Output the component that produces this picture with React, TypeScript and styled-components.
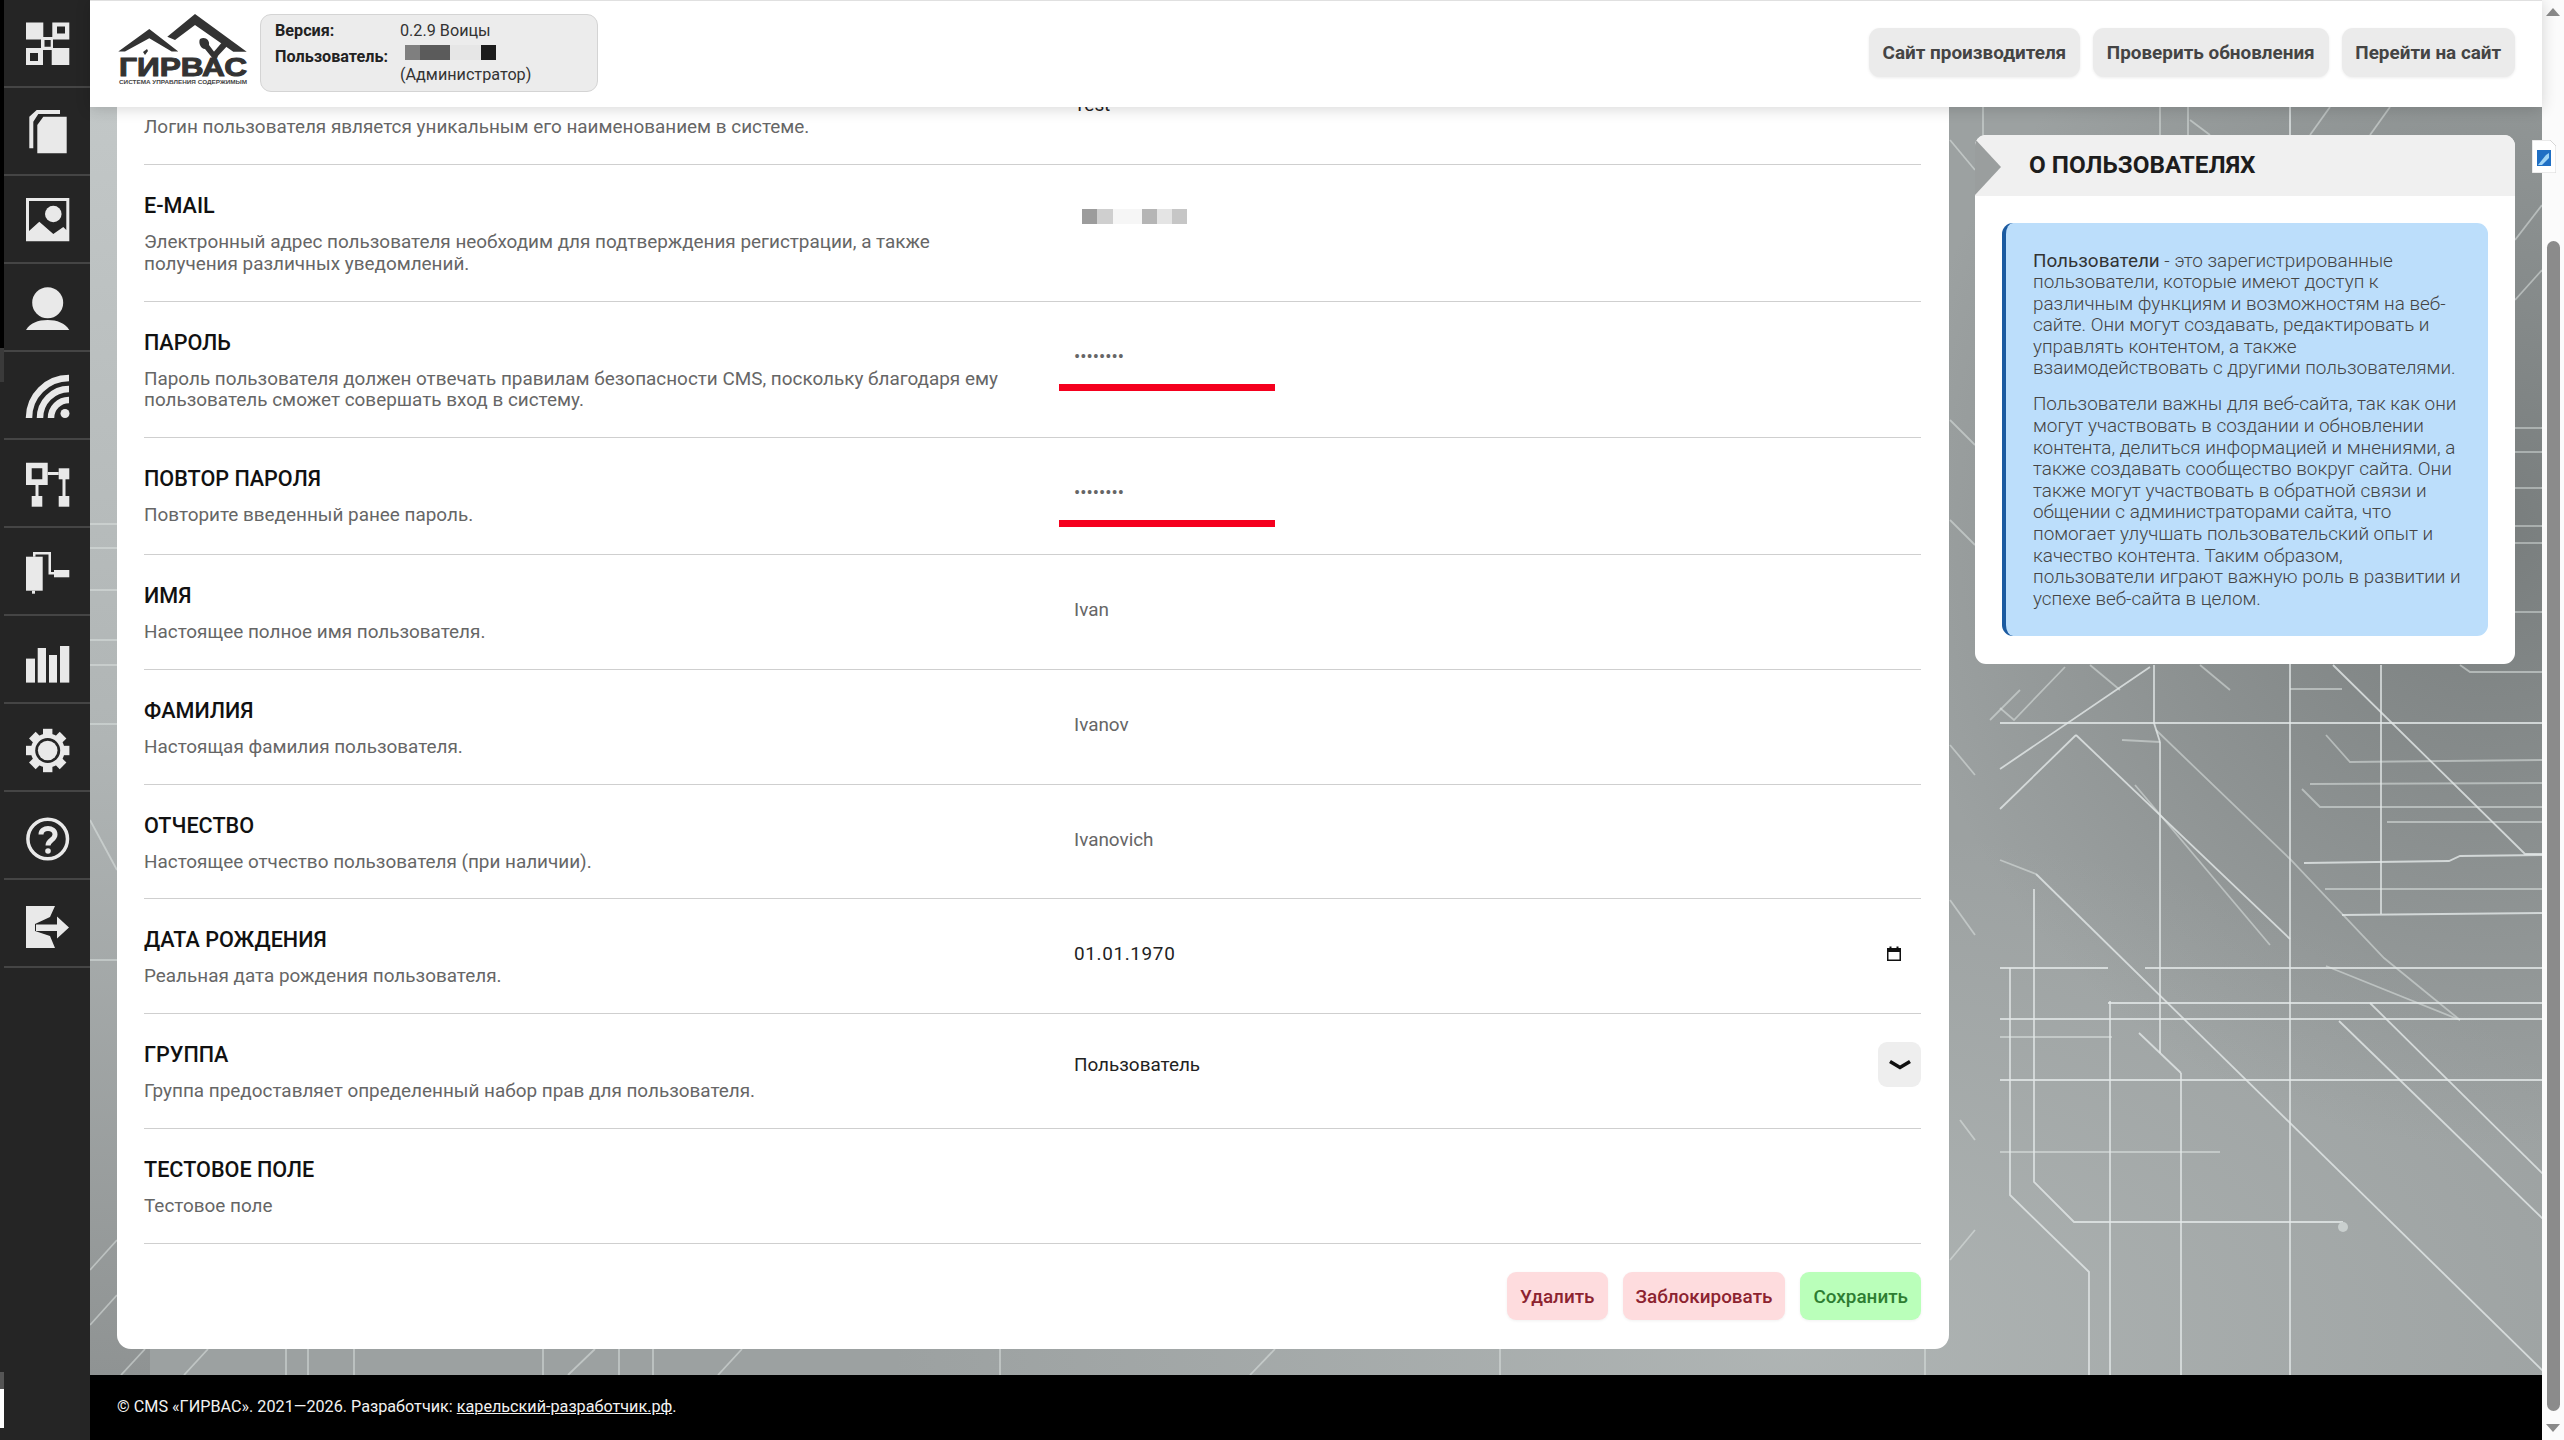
import React from "react";
import styled, { createGlobalStyle } from "styled-components";

const Global = createGlobalStyle`
  html, body { margin: 0; padding: 0; height: 100%; overflow: hidden; background: #fff; }
  #root { height: 100%; }
  * { box-sizing: border-box; }
  body { font-family: Roboto, "Noto Sans", "Liberation Sans", sans-serif; }
`;

const Page = styled.div`
  position: relative;
  display: grid;
  grid-template-columns: 90px 1fr 22px;
  grid-template-rows: 107px 1fr 65px;
  width: 100%;
  height: 100vh;
  overflow: hidden;
`;

/* ---------- sidebar ---------- */
const Sidebar = styled.nav`
  grid-row: 1 / 4;
  position: relative;
  background: #252525;
  padding-left: 4px;
`;
const SideTrack = styled.div<{ $top: number; $height: number; $color: string }>`
  position: absolute;
  left: 0;
  top: ${(p) => p.$top}px;
  width: 4px;
  height: ${(p) => p.$height}px;
  background: ${(p) => p.$color};
`;
const NavItem = styled.a`
  display: block;
  height: 88px;
  padding: 22px 0 0 22px;
  border-bottom: 2px solid #454545;
`;
const NavIcon = styled.svg`
  display: block;
  width: 44px;
  height: 44px;
  overflow: visible;
  fill: #e9e9e9;
`;

const gearTeeth = [0, 45, 90, 135, 180, 225, 270, 315];

const icons: React.ReactNode[] = [
  <>
    <rect x="0" y="0.5" width="17.3" height="17" />
    <path fillRule="evenodd" d="M26.3 .5h17v17h-17zM31 4.500v7h8v-7z" />
    <path fillRule="evenodd" d="M15 15h12v13H15zM18.500 18v6.700h6.200V18z" />
    <path fillRule="evenodd" d="M0 26h17v17H0zM4 31v8h8v-8z" />
    <rect x="25.700" y="26" width="17.600" height="17" />
  </>,
  <>
    <path d="M11.300 15l6-8.300h23.400v36.600H11.300z" />
    <path d="M3.300 38.300V6.700L10.700 0H34v4H12.300l-5 7.700v26.600z" />
  </>,
  <>
    <path fillRule="evenodd" d="M0 0h43.300v43.300H0zM3 3v30l10.300-9.300 14 12.300 10-7 3 3V3z" />
    <circle cx="27.300" cy="16" r="8.300" />
  </>,
  <>
    <circle cx="21.700" cy="16.700" r="15.500" />
    <path d="M0 44C4 37 12 34 21.700 34 31 34 39 37 43.300 44z" />
  </>,
  <>
    <circle cx="39" cy="39.500" r="4.500" />
    <g fill="none" stroke="#e9e9e9" strokeWidth="6.500">
      <path d="M3 44A40 40 0 0 1 43 4" />
      <path d="M14 44A29 29 0 0 1 43 15" />
      <path d="M25 44A18 18 0 0 1 43 26" />
    </g>
  </>,
  <>
    <path fillRule="evenodd" d="M0 .7h21.700V23H0zM5.700 6.300v11h10.600v-11z" />
    <rect x="32.700" y="6.300" width="10.600" height="11" />
    <rect x="5.700" y="34" width="10.600" height="10.700" />
    <rect x="32.700" y="34" width="10.600" height="10.700" />
    <rect x="21.700" y="10" width="11" height="3" />
    <rect x="9.500" y="23" width="3" height="11" />
    <rect x="36.500" y="17" width="3" height="17" />
  </>,
  <>
    <rect x="0" y="6.700" width="16.700" height="34" />
    <rect x="6" y="40.700" width="3" height="3" />
    <rect x="28" y="20" width="15.300" height="7.300" />
    <path d="M7 6.700V2h18v20h3v2.500h-5.500V4.500H9.500v2.200z" />
  </>,
  <>
    <rect x="0" y="20.600" width="9" height="24" />
    <rect x="11.700" y="10" width="8.300" height="34.600" />
    <rect x="23" y="17" width="8" height="27.600" />
    <rect x="34" y="8" width="9.300" height="36.600" />
  </>,
  <>
    {gearTeeth.map((a) => (
      <rect key={a} x="17" y="2.800" width="9.400" height="10" transform={`rotate(${a} 21.700 24.500)`} />
    ))}
    <circle cx="21.700" cy="24.500" r="17" />
    <circle cx="21.700" cy="24.500" r="12.500" fill="#252525" />
    <circle cx="21.700" cy="24.500" r="9.800" />
  </>,
  <>
    <circle cx="21.700" cy="25" r="19.800" fill="none" stroke="#e9e9e9" strokeWidth="3.500" />
    <path d="M15 20.500c0-8 14-8 14 0 0 5.500-7 5.500-7 11" fill="none" stroke="#e9e9e9" strokeWidth="5" />
    <circle cx="22" cy="37" r="2.800" />
  </>,
  <>
    <path d="M0 4h29l-5 11-15 7v7l15 5 5 12H0z" />
    <path d="M10 22.500h21V14.500l12 11-12 11v-7.500H10z" />
  </>,
];

/* ---------- header ---------- */
const Header = styled.header`
  grid-column: 2;
  grid-row: 1;
  z-index: 2;
  display: flex;
  align-items: flex-start;
  justify-content: space-between;
  padding: 13px 27px 0 26px;
  background: #fff;
  border-top: 1px solid #e0e0e0;
  box-shadow: 0 2px 14px rgba(0, 0, 0, 0.16);
`;
const Brand = styled.div`
  display: flex;
  align-items: flex-start;
  gap: 10px;
`;
const Logo = styled.svg`
  display: block;
  width: 134px;
  height: 78px;
  margin-top: -2px;
  overflow: visible;
`;
const InfoBox = styled.div`
  display: grid;
  grid-template-columns: 125px 1fr;
  align-content: start;
  row-gap: 4px;
  width: 338px;
  height: 78px;
  padding: 5px 14px 0;
  background: #ececec;
  border: 1px solid #d4d4d4;
  border-radius: 11px;
  font-size: 16.200px;
  line-height: 22px;
`;
const InfoLabel = styled.span`
  font-weight: 700;
  color: #222;
`;
const InfoValue = styled.span`
  color: #333;
`;
const Censor = styled.div`
  display: flex;
`;
const UserCensor = styled(Censor)`
  margin: -1px 0 4px 5px;
`;
const EmailCensor = styled(Censor)`
  padding-left: 8px;
`;
const CensorBit = styled.i<{ $w: number; $c: string }>`
  display: block;
  width: ${(p) => p.$w}px;
  height: 15px;
  background: ${(p) => p.$c};
  filter: blur(0.6px);
`;
const HeaderActions = styled.div`
  display: flex;
  gap: 13px;
  margin-top: 14px;
`;
const HeaderButton = styled.a`
  display: flex;
  align-items: center;
  height: 49px;
  padding: 0 13.800px;
  background: #ebebeb;
  border-radius: 11px;
  box-shadow: 0 1px 3px rgba(0, 0, 0, 0.08);
  font-size: 18.900px;
  font-weight: 700;
  color: #444;
  white-space: nowrap;
`;

/* ---------- main ---------- */
const Main = styled.main`
  grid-column: 2;
  grid-row: 2;
  position: relative;
  display: flex;
  align-items: flex-start;
  gap: 26px;
  padding: 0 27px;
  overflow: hidden;
  background:
    radial-gradient(ellipse 600px 620px at 2400px 420px, rgba(108, 113, 113, 0.75), transparent),
    radial-gradient(ellipse 900px 520px at 1700px 1240px, rgba(190, 196, 195, 0.55), transparent),
    linear-gradient(180deg, #c2c7c7 0%, #b0b5b5 50%, #8f9393 100%) 0 0 / 60px 100% no-repeat,
    #9ca1a1;
`;
const Backdrop = styled.svg`
  position: absolute;
  left: 0;
  top: 0;
  width: 100%;
  height: 100%;
  pointer-events: none;
`;
const Card = styled.section`
  position: relative;
  flex: 0 0 1832px;
  margin-top: -57px;
  padding: 0 28px 29px 27px;
  background: #fff;
  border-radius: 14px;
`;
const Row = styled.div`
  display: grid;
  grid-template-columns: 860px 1fr;
  column-gap: 55px;
  padding: 28px 0 26.400px;
  border-bottom: 1px solid #cfcfcf;
`;
const RowText = styled.div``;
const RowTitle = styled.div`
  height: 26px;
  font-size: 21.600px;
  line-height: 26px;
  font-weight: 500;
  color: #111;
  text-transform: uppercase;
`;
const RowHint = styled.div`
  margin-top: 12px;
  font-size: 18.900px;
  line-height: 21.600px;
  color: #666;
`;
const ValueCell = styled.div<{ $flush?: boolean }>`
  padding-top: ${(p) => (p.$flush ? 0 : 16)}px;
`;
const Value = styled.div<{ $dark?: boolean }>`
  padding-left: 15px;
  font-size: 18.900px;
  line-height: 22px;
  color: ${(p) => (p.$dark ? "#222" : "#666")};
`;
const PasswordField = styled.input`
  display: block;
  width: 216px;
  height: 45px;
  padding: 0 0 16px 15px;
  border: 0;
  border-bottom: 7px solid #f5001e;
  outline: 0;
  background: transparent;
  font-family: inherit;
  font-size: 18.500px;
  line-height: 22px;
  color: #666;
`;
const DateField = styled(Value)`
  display: flex;
  align-items: center;
  justify-content: space-between;
  padding-right: 19px;
  letter-spacing: 0.650px;
`;
const SelectField = styled.div`
  display: flex;
  align-items: center;
  justify-content: space-between;
  height: 45px;
  padding-left: 15px;
  font-size: 18.900px;
  color: #222;
`;
const Chevron = styled.span`
  display: flex;
  align-items: center;
  justify-content: center;
  width: 43px;
  height: 45px;
  background: #eeeeee;
  border-radius: 9px;
`;
const Actions = styled.div`
  display: flex;
  justify-content: flex-end;
  gap: 15px;
  padding-top: 28px;
`;
const ActionButton = styled.a<{ $tone: "danger" | "ok" }>`
  display: flex;
  align-items: center;
  height: 48px;
  padding: 0 13px;
  border-radius: 9px;
  font-size: 18.900px;
  font-weight: 500;
  white-space: nowrap;
  background: ${(p) => (p.$tone === "ok" ? "#baffba" : "#fedcde")};
  color: ${(p) => (p.$tone === "ok" ? "#2e7d32" : "#8c2330")};
  box-shadow: 0 1px 3px rgba(0, 0, 0, 0.06);
`;

/* ---------- aside ---------- */
const Aside = styled.aside`
  position: relative;
  flex: 0 0 540px;
  margin-top: 28px;
  padding-bottom: 28px;
  background: #fff;
  border-radius: 11px;
  overflow: hidden;
`;
const AsideHead = styled.h2`
  position: relative;
  display: flex;
  align-items: center;
  height: 61px;
  margin: 0 0 27px;
  padding: 0 0 2px 54px;
  background: #f0f0f0;
  font-size: 24.300px;
  font-weight: 700;
  color: #1d1d1d;
  text-transform: uppercase;
  &::before {
    content: "";
    position: absolute;
    left: 0;
    top: 4px;
    border-left: 26px solid #9a9e9e;
    border-top: 28px solid transparent;
    border-bottom: 28px solid transparent;
  }
`;
const Note = styled.div`
  margin: 0 27px 0 27px;
  padding: 26.500px 26px 26.500px 27px;
  background: #bcdefb;
  border-left: 4px solid #1b5aa0;
  border-radius: 11px;
  font-size: 18.900px;
  line-height: 21.600px;
  font-weight: 300;
  color: #444;
`;
const NotePara = styled.p`
  margin: 0 0 14.400px;
  &:last-child {
    margin-bottom: 0;
  }
`;
const NoteStrong = styled.span`
  font-weight: 400;
  color: #333;
`;

/* ---------- footer ---------- */
const Footer = styled.footer`
  grid-column: 2;
  grid-row: 3;
  z-index: 1;
  display: flex;
  align-items: center;
  padding: 0 27px 3px;
  background: #000;
  font-size: 16.200px;
  color: #f2f2f2;
`;
const FooterLink = styled.a`
  color: #f2f2f2;
  text-decoration: underline;
`;

/* ---------- page scrollbar ---------- */
const Scrollbar = styled.div`
  grid-column: 3;
  grid-row: 1 / 4;
  display: flex;
  flex-direction: column;
  align-items: center;
  padding: 8px 0;
  background: #fbfbfb;
`;
const Arrow = styled.span<{ $down?: boolean }>`
  width: 0;
  height: 0;
  border-left: 7px solid transparent;
  border-right: 7px solid transparent;
  ${(p) => (p.$down ? "border-top: 8px solid #8a8a8a;" : "border-bottom: 8px solid #8a8a8a;")}
`;
const ThumbTrack = styled.div`
  flex: 1;
  width: 13px;
  padding: 225px 0 13px;
`;
const Thumb = styled.div`
  height: 100%;
  background: #8b8b8b;
  border-radius: 7px;
`;
const FloatBadge = styled.svg`
  position: absolute;
  left: 2532px;
  top: 140px;
  z-index: 3;
  width: 24px;
  height: 33px;
`;

/* background circuit lines, in page coordinates */
const strong: string[] = [
  "2000,723 2542,723",
  "2290,107 2290,1375",
  "2000,968 2108,968",
  "2145,968 2542,968",
  "2110,1001 2110,1375",
  "2108,1003 2542,1003",
  "2000,1019 2542,1019",
  "2000,1080 2542,1080",
  "2181,1073 2181,1375",
  "2139,1033 2181,1073",
  "2160,742 2160,1053",
  "2154,665 2154,723 2160,742",
  "2333,665 2525,854 2542,854",
  "2304,863 2449,861 2460,856 2542,855",
  "2381,665 2381,914",
  "2342,915 2542,913",
  "2036,874 2543,1371",
  "2076,735 2290,939",
  "2034,889 2034,1182 2074,1222 2343,1222",
  "2010,968 2010,1195 2089,1272 2089,1375",
  "2370,1003 2546,1177",
  "2339,1021 2546,1222",
  "2076,735 2000,809",
  "2150,667 2000,769",
];
const soft: string[] = [
  "2290,689 2342,689",
  "2326,735 2350,762 2542,760",
  "2310,784 2542,783",
  "2302,789 2320,807 2542,807",
  "2387,822 2542,822",
  "2325,889 2542,889",
  "2000,1037 2112,1037",
  "2000,1152 2220,1152",
  "2065,667 2014,720 2000,708",
  "2156,730 2290,859 2384,958 2460,1020",
  "2326,966 2460,1020",
  "2122,740 2160,742",
  "2135,785 2270,945",
  "2000,860 2036,874",
  "1983,107 1983,135",
  "2160,107 2160,135",
  "2188,107 2188,135",
  "2310,135 2330,107",
  "2370,135 2390,107",
  "2190,120 2210,135",
  "1950,140 1975,170",
  "1950,420 1975,445",
  "1950,520 1975,545",
  "1950,745 1975,775",
  "1950,900 1975,935",
  "1960,1120 1975,1140",
  "1950,1260 1975,1230",
  "2515,240 2542,205",
  "2515,300 2542,270",
  "2515,428 2542,428",
  "2515,452 2542,452",
  "2515,488 2542,488",
  "2515,526 2542,526",
  "2515,543 2542,543",
  "2515,612 2542,612",
  "2020,690 1990,720",
  "2120,690 2090,665",
  "2200,665 2230,690",
  "2460,665 2470,672 2542,672",
  "90,524 117,524",
  "90,548 117,548",
  "90,590 117,590",
  "90,640 117,640",
  "90,665 117,665",
  "90,724 117,724",
  "90,820 117,870",
  "90,960 117,960",
  "90,1270 117,1240",
  "90,1325 117,1295",
  "121,1375 145,1349",
  "184,1375 208,1349",
  "286,1349 286,1375",
  "308,1349 308,1375",
  "354,1349 354,1375",
  "543,1349 543,1375",
  "568,1375 595,1349",
  "619,1349 619,1375",
  "653,1349 653,1375",
  "718,1375 742,1349",
  "1000,1349 1000,1375",
  "1250,1375 1275,1349",
  "1500,1349 1500,1375",
  "1925,1349 1925,1375",
];

const Lines = () => (
  <Backdrop viewBox="90 107 2452 1268" preserveAspectRatio="none">
    <g fill="none" stroke="#e4e9e8">
      {strong.map((p) => (
        <polyline key={p} points={p} strokeWidth="1.800" opacity="0.8" />
      ))}
      {soft.map((p) => (
        <polyline key={p} points={p} strokeWidth="1.800" opacity="0.5" />
      ))}
    </g>
    <circle cx="2343" cy="1227" r="5" fill="#c9cfce" />
  </Backdrop>
);

const App = () => (
  <Page>
    <Global />
    <Sidebar>
      <SideTrack $top={0} $height={348} $color="#000" />
      <SideTrack $top={348} $height={34} $color="#3a3a3a" />
      <SideTrack $top={1372} $height={17} $color="#555" />
      <SideTrack $top={1389} $height={39} $color="#fff" />
      {icons.map((icon, i) => (
        <NavItem key={i}>
          <NavIcon viewBox="0 0 44 44">{icon}</NavIcon>
        </NavItem>
      ))}
    </Sidebar>

    <Header>
      <Brand>
        <Logo viewBox="0 0 134 78">
          <path d="M2.300 39.500L33.300 17 62.300 39.500H55.700L33.300 26.300 9 39.500z" fill="#333" />
          <path d="M51.300 24.700L79 2l51.700 37.700h-13.400L79 13 59 28z" fill="#333" />
          <path d="M84 27c5-3 10 1 9 6l9 12-4 3-9-11c-4 0-7-6-5-10z" fill="#333" />
          <path d="M108 28l5 4-13 14-4-4z" fill="#333" />
          <text x="3" y="64" fontFamily="Liberation Sans" fontWeight="700" fontSize="26" fill="#333" stroke="#333" strokeWidth="1" textLength="128" lengthAdjust="spacingAndGlyphs">
            ГИРВАС
          </text>
          <path d="M27 40l4-3 1 2-3 4z" fill="#333" />
          <text x="3" y="72" fontFamily="Liberation Sans" fontWeight="700" fontSize="5.500" fill="#444" textLength="128" lengthAdjust="spacingAndGlyphs">
            СИСТЕМА УПРАВЛЕНИЯ СОДЕРЖИМЫМ
          </text>
        </Logo>
        <InfoBox>
          <InfoLabel>Версия:</InfoLabel>
          <InfoValue>0.2.9 Воицы</InfoValue>
          <InfoLabel>Пользователь:</InfoLabel>
          <InfoValue>
            <UserCensor>
              <CensorBit $w={15} $c="#7f7f7f" />
              <CensorBit $w={30} $c="#5b5b5b" />
              <CensorBit $w={31} $c="#e6e6e6" />
              <CensorBit $w={15} $c="#1c1c1c" />
            </UserCensor>
            (Администратор)
          </InfoValue>
        </InfoBox>
      </Brand>
      <HeaderActions>
        <HeaderButton>Сайт производителя</HeaderButton>
        <HeaderButton>Проверить обновления</HeaderButton>
        <HeaderButton>Перейти на сайт</HeaderButton>
      </HeaderActions>
    </Header>

    <Main>
      <Lines />
      <Card>
        <Row>
          <RowText>
            <RowTitle>Логин</RowTitle>
            <RowHint>Логин пользователя является уникальным его наименованием в системе.</RowHint>
          </RowText>
          <ValueCell><Value $dark>Test</Value></ValueCell>
        </Row>
        <Row>
          <RowText>
            <RowTitle>E-mail</RowTitle>
            <RowHint>Электронный адрес пользователя необходим для подтверждения регистрации, а также получения различных уведомлений.</RowHint>
          </RowText>
          <ValueCell>
            <Value>
              <EmailCensor>
                <CensorBit $w={15} $c="#9c9c9c" />
                <CensorBit $w={16} $c="#cfcfcf" />
                <CensorBit $w={29} $c="#f6f6f6" />
                <CensorBit $w={15} $c="#b5b5b5" />
                <CensorBit $w={15} $c="#e4e4e4" />
                <CensorBit $w={15} $c="#c6c6c6" />
              </EmailCensor>
            </Value>
          </ValueCell>
        </Row>
        <Row>
          <RowText>
            <RowTitle>Пароль</RowTitle>
            <RowHint>
              Пароль пользователя должен отвечать правилам безопасности CMS, поскольку благодаря ему пользователь сможет совершать вход в систему.
            </RowHint>
          </RowText>
          <ValueCell><PasswordField type="password" defaultValue="12345678" readOnly /></ValueCell>
        </Row>
        <Row>
          <RowText>
            <RowTitle>Повтор пароля</RowTitle>
            <RowHint>Повторите введенный ранее пароль.</RowHint>
          </RowText>
          <ValueCell><PasswordField type="password" defaultValue="12345678" readOnly /></ValueCell>
        </Row>
        <Row>
          <RowText>
            <RowTitle>Имя</RowTitle>
            <RowHint>Настоящее полное имя пользователя.</RowHint>
          </RowText>
          <ValueCell><Value>Ivan</Value></ValueCell>
        </Row>
        <Row>
          <RowText>
            <RowTitle>Фамилия</RowTitle>
            <RowHint>Настоящая фамилия пользователя.</RowHint>
          </RowText>
          <ValueCell><Value>Ivanov</Value></ValueCell>
        </Row>
        <Row>
          <RowText>
            <RowTitle>Отчество</RowTitle>
            <RowHint>Настоящее отчество пользователя (при наличии).</RowHint>
          </RowText>
          <ValueCell><Value>Ivanovich</Value></ValueCell>
        </Row>
        <Row>
          <RowText>
            <RowTitle>Дата рождения</RowTitle>
            <RowHint>Реальная дата рождения пользователя.</RowHint>
          </RowText>
          <ValueCell>
            <DateField $dark>
              01.01.1970
              <svg width="16" height="16" viewBox="0 0 16 16" fill="#111">
                <path fillRule="evenodd" d="M1 2h14v13H1zM2.500 6v7.500h11V6z" />
                <rect x="3.500" y="0.500" width="2" height="3" />
                <rect x="10.500" y="0.500" width="2" height="3" />
              </svg>
            </DateField>
          </ValueCell>
        </Row>
        <Row>
          <RowText>
            <RowTitle>Группа</RowTitle>
            <RowHint>Группа предоставляет определенный набор прав для пользователя.</RowHint>
          </RowText>
          <ValueCell $flush>
            <SelectField>
              Пользователь
              <Chevron>
                <svg width="22" height="12" viewBox="0 0 22 12" fill="none" stroke="#111" strokeWidth="3.600">
                  <path d="M1 2.500l10 6 10-6" />
                </svg>
              </Chevron>
            </SelectField>
          </ValueCell>
        </Row>
        <Row>
          <RowText>
            <RowTitle>Тестовое поле</RowTitle>
            <RowHint>Тестовое поле</RowHint>
          </RowText>
        </Row>
        <Actions>
          <ActionButton $tone="danger">Удалить</ActionButton>
          <ActionButton $tone="danger">Заблокировать</ActionButton>
          <ActionButton $tone="ok">Сохранить</ActionButton>
        </Actions>
      </Card>
      <Aside>
        <AsideHead>О пользователях</AsideHead>
        <Note>
          <NotePara>
            <NoteStrong>Пользователи</NoteStrong> - это зарегистрированные пользователи, которые имеют доступ к различным функциям и возможностям на веб-сайте. Они могут создавать, редактировать и управлять контентом, а также взаимодействовать с другими пользователями.
          </NotePara>
          <NotePara>
            Пользователи важны для веб-сайта, так как они могут участвовать в создании и обновлении контента, делиться информацией и мнениями, а также создавать сообщество вокруг сайта. Они также могут участвовать в обратной связи и общении с администраторами сайта, что помогает улучшать пользовательский опыт и качество контента. Таким образом, пользователи играют важную роль в развитии и успехе веб-сайта в целом.
          </NotePara>
        </Note>
      </Aside>
    </Main>

    <Footer>
      <span>
        © CMS «ГИРВАС». 2021—2026. Разработчик: <FooterLink>карельский-разработчик.рф</FooterLink>.
      </span>
    </Footer>

    <Scrollbar>
      <Arrow />
      <ThumbTrack><Thumb /></ThumbTrack>
      <Arrow $down />
    </Scrollbar>

    <FloatBadge viewBox="0 0 24 33">
      <path d="M0 0h18l6 6v27H0z" fill="#fff" stroke="#d6d6d6" />
      <rect x="5" y="10" width="14" height="16" fill="#1f6fc4" />
      <path d="M6 25l8-10 3-2v5l-7 7z" fill="#9fd4f5" />
    </FloatBadge>
  </Page>
);

export default App;
